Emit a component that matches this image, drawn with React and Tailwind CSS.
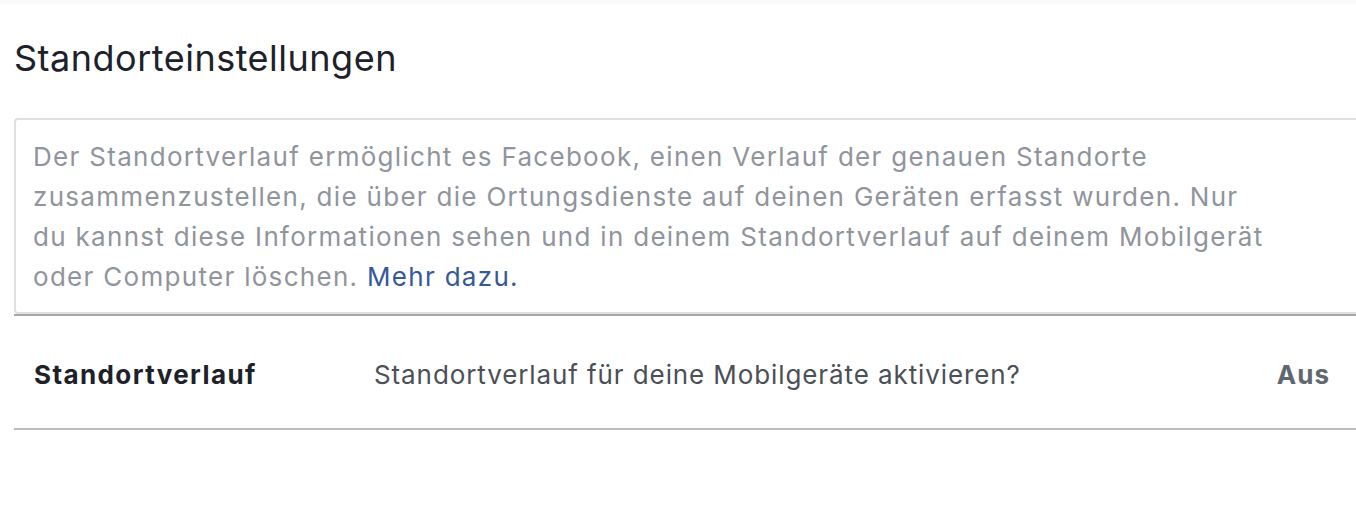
import React from "react";

export default function App() {
  return (
    <div className="w-[1356px] h-[522px] overflow-hidden bg-white" style={{ fontFamily: "Inter, 'Liberation Sans', sans-serif" }}>
      <div className="h-[4px] bg-[#fafafa]" />
      <div className="pl-[14px]">
        <h1 className="mt-[30px] text-[36px] leading-[48px] text-[#1d2129] tracking-[0.5px]">Standorteinstellungen</h1>
        <div className="mt-[36px] w-[1400px]">
          <div className="border-2 border-[#dddfe2] rounded-[4px] pt-[17px] pb-[15px] pl-[17px]">
            <p className="max-w-[1242px] text-[26px] leading-[40px] text-[#90949c] tracking-[1.3px]">
              Der Standortverlauf ermöglicht es Facebook, einen Verlauf der genauen Standorte zusammenzustellen, die über die Ortungsdienste auf deinen Geräten erfasst wurden. Nur du kannst diese Informationen sehen und in deinem Standortverlauf auf deinem Mobilgerät oder Computer löschen.{" "}
              <a href="#" className="text-[#365899]">Mehr dazu.</a>
            </p>
          </div>
          <div className="h-[2px] bg-[#a8a8a8]" />
        </div>
        <div className="flex items-center h-[114px] pt-[4px] border-b-2 border-[#bcbcbc] pl-[20px] pr-[26px] text-[26px]">
          <div className="w-[340px] font-bold text-[#1d2129] tracking-[1.4px]">Standortverlauf</div>
          <div className="flex-1 text-[#4b4f56] tracking-[0.9px]">Standortverlauf für deine Mobilgeräte aktivieren?</div>
          <div className="font-bold text-[#606770] tracking-[1px]">Aus</div>
        </div>
      </div>
    </div>
  );
}
